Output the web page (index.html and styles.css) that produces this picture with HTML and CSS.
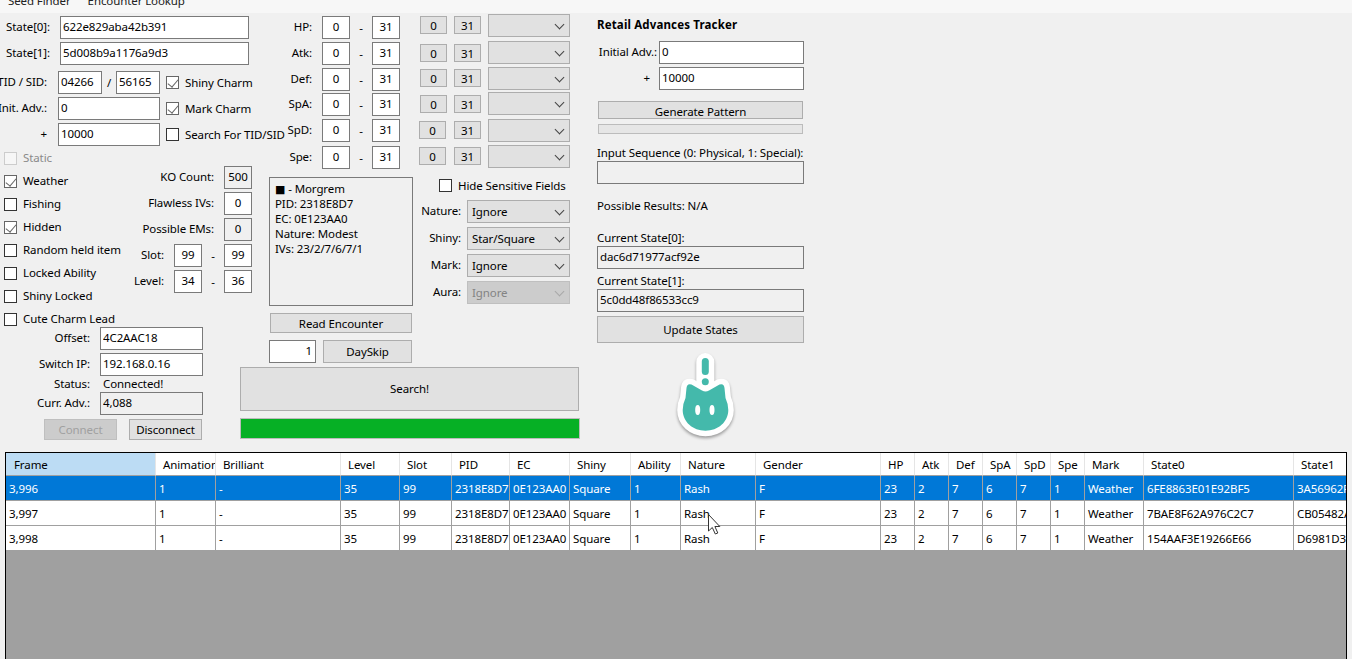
FILE: index.html
```html
<!DOCTYPE html>
<html lang="en">
<head>
<meta charset="utf-8">
<title>Raid Finder</title>
<link rel="stylesheet" href="styles.css">
</head>
<body>
<nav class="menu"><span class="menu-a">Seed Finder</span><span class="menu-b">Encounter Lookup</span></nav>
<main class="main">
  <section class="left">
    <div class="field"><span class="lbl w50">State[0]:</span><input class="tb w189 ml10" value="622e829aba42b391"></div>
    <div class="field"><span class="lbl w50">State[1]:</span><input class="tb w189 ml10" value="5d008b9a1176a9d3"></div>
    <div class="field mt6"><span class="lbl w47">TID / SID:</span><input class="tb w44 ml11" value="04266"><span class="slash">/</span><input class="tb w44" value="56165"><label class="chk ml6"><input type="checkbox" checked>Shiny Charm</label></div>
    <div class="field"><span class="lbl w47">Init. Adv.:</span><input class="tb w102 ml11" value="0"><label class="chk ml6"><input type="checkbox" checked>Mark Charm</label></div>
    <div class="field"><span class="lbl w47">+</span><input class="tb w102 ml11" value="10000"><label class="chk ml6"><input type="checkbox">Search For TID/SID</label></div>

    <div class="filters">
      <div class="checks">
        <label class="chk rowc off"><input type="checkbox" disabled>Static</label>
        <label class="chk rowc"><input type="checkbox" checked>Weather</label>
        <label class="chk rowc"><input type="checkbox">Fishing</label>
        <label class="chk rowc"><input type="checkbox" checked>Hidden</label>
        <label class="chk rowc"><input type="checkbox">Random held item</label>
        <label class="chk rowc"><input type="checkbox">Locked Ability</label>
        <label class="chk rowc"><input type="checkbox">Shiny Locked</label>
        <label class="chk rowc"><input type="checkbox">Cute Charm Lead</label>
      </div>
      <div class="counts">
        <div class="field end"><span class="lbl">KO Count:</span><input class="tb w28 ml10 ctr ro" value="500" readonly></div>
        <div class="field end"><span class="lbl">Flawless IVs:</span><input class="tb w28 ml10 ctr" value="0"></div>
        <div class="field end"><span class="lbl">Possible EMs:</span><input class="tb w28 ml10 ctr ro" value="0" readonly></div>
        <div class="field end"><span class="lbl">Slot:</span><input class="tb w28 ml10 ctr" value="99"><span class="dash">-</span><input class="tb w28 ctr" value="99"></div>
        <div class="field end"><span class="lbl">Level:</span><input class="tb w28 ml10 ctr" value="34"><span class="dash">-</span><input class="tb w28 ctr" value="36"></div>
      </div>
    </div>

    <div class="field m0"><span class="lbl w90">Offset:</span><input class="tb w103 ml10" value="4C2AAC18"></div>
    <div class="field"><span class="lbl w90">Switch IP:</span><input class="tb w103 ml10" value="192.168.0.16"></div>
    <div class="status"><span class="lbl w90">Status:</span><span class="ml13">Connected!</span></div>
    <div class="field m0"><span class="lbl w90">Curr. Adv.:</span><input class="tb w103 ml10 ro" value="4,088" readonly></div>
    <div class="conn"><button class="btn conn-btn" disabled>Connect</button><button class="btn conn-btn">Disconnect</button></div>
  </section>

  <section class="center">
    <div class="ivs">
      <div class="iv-inputs">
        <div class="field m0"><span class="lbl w52">HP:</span><input class="tb w28 ml10 ctr" value="0"><span class="dash">-</span><input class="tb w28 ctr" value="31"></div>
        <div class="field"><span class="lbl w52">Atk:</span><input class="tb w28 ml10 ctr" value="0"><span class="dash">-</span><input class="tb w28 ctr" value="31"></div>
        <div class="field"><span class="lbl w52">Def:</span><input class="tb w28 ml10 ctr" value="0"><span class="dash">-</span><input class="tb w28 ctr" value="31"></div>
        <div class="field mt2"><span class="lbl w52">SpA:</span><input class="tb w28 ml10 ctr" value="0"><span class="dash">-</span><input class="tb w28 ctr" value="31"></div>
        <div class="field"><span class="lbl w52">SpD:</span><input class="tb w28 ml10 ctr" value="0"><span class="dash">-</span><input class="tb w28 ctr" value="31"></div>
        <div class="field mt4"><span class="lbl w52">Spe:</span><input class="tb w28 ml10 ctr" value="0"><span class="dash">-</span><input class="tb w28 ctr" value="31"></div>
      </div>
      <div class="iv-btns">
        <div class="iv-pair"><button class="btn iv-btn">0</button><button class="btn iv-btn">31</button></div>
        <div class="iv-pair gap10"><button class="btn iv-btn">0</button><button class="btn iv-btn">31</button></div>
        <div class="iv-pair gap7"><button class="btn iv-btn">0</button><button class="btn iv-btn">31</button></div>
        <div class="iv-pair gap8"><button class="btn iv-btn">0</button><button class="btn iv-btn">31</button></div>
        <div class="iv-pair gap8"><button class="btn iv-btn nudge">0</button><button class="btn iv-btn">31</button></div>
        <div class="iv-pair gap8"><button class="btn iv-btn nudge">0</button><button class="btn iv-btn">31</button></div>
      </div>
      <div class="iv-sels">
        <div class="sel w82"></div>
        <div class="sel w82 gap4"></div>
        <div class="sel w82 gap3"></div>
        <div class="sel w82 gap2"></div>
        <div class="sel w82 gap4"></div>
        <div class="sel w82 gap3"></div>
      </div>
    </div>

    <div class="lower">
      <div class="enc">
        <div class="enc-box"><span class="sq">■</span> - Morgrem<br>PID: 2318E8D7<br>EC: 0E123AA0<br>Nature: Modest<br>IVs: 23/2/7/6/7/1</div>
        <button class="btn read">Read Encounter</button>
        <div class="skip"><input class="tb w47 rt" value="1"><button class="btn dayskip">DaySkip</button></div>
      </div>
      <div class="opts">
        <label class="chk hide"><input type="checkbox">Hide Sensitive Fields</label>
        <div class="opt first"><span class="lbl w48">Nature:</span><div class="sel w103">Ignore</div></div>
        <div class="opt"><span class="lbl w48">Shiny:</span><div class="sel w103">Star/Square</div></div>
        <div class="opt"><span class="lbl w48">Mark:</span><div class="sel w103">Ignore</div></div>
        <div class="opt"><span class="lbl w48">Aura:</span><div class="sel w103 dis">Ignore</div></div>
      </div>
    </div>
    <button class="btn search">Search!</button>
    <div class="progress"></div>
  </section>

  <section class="tracker">
    <h2 class="title">Retail Advances Tracker</h2>
    <div class="field mt8"><span class="lbl w60">Initial Adv.:</span><input class="tb w145 ml2" value="0"></div>
    <div class="field"><span class="lbl w53">+</span><input class="tb w145 ml9" value="10000"></div>
    <button class="btn gen">Generate Pattern</button>
    <div class="track-bar"></div>
    <div class="cap cap-seq">Input Sequence (0: Physical, 1: Special):</div>
    <input class="tb w207 ro" readonly>
    <div class="cap cap-res">Possible Results: N/A</div>
    <div class="cap cap-s0">Current State[0]:</div>
    <input class="tb w207 ro" value="dac6d71977acf92e" readonly>
    <div class="cap cap-s1">Current State[1]:</div>
    <input class="tb w207 ro" value="5c0dd48f86533cc9" readonly>
    <button class="btn update">Update States</button>
    <svg class="mascot" width="60" height="86" viewBox="0 0 60 86">
      <g fill="#fff" stroke="#fff" stroke-linejoin="round" stroke-linecap="round">
        <path stroke-width="18" d="M29.300 9V28"/>
        <path stroke-width="11" d="M10.500 35Q11 30 15.500 31.500L26 37.500Q29.500 39.500 33 37.500L43.500 31.500Q48 30 48.500 35L49.500 45Q52.300 51 52.300 57C52.300 69 42 77.700 29.500 77.700C17 77.700 6.700 69 6.700 57Q6.700 51 9.500 45Z"/>
      </g>
      <rect x="25.800" y="5" width="7" height="17" rx="3.500" fill="#44b9ab"/>
      <circle cx="29.300" cy="28.700" r="3.500" fill="#44b9ab"/>
      <path fill="#44b9ab" d="M10.500 35Q11 30 15.500 31.500L26 37.500Q29.500 39.500 33 37.500L43.500 31.500Q48 30 48.500 35L49.500 45Q52.300 51 52.300 57C52.300 69 42 77.700 29.500 77.700C17 77.700 6.700 69 6.700 57Q6.700 51 9.500 45Z"/>
      <ellipse cx="21.700" cy="57" rx="2.500" ry="5" fill="#fff"/>
      <ellipse cx="36" cy="57" rx="2.500" ry="5" fill="#fff"/>
    </svg>
  </section>
</main>

<section class="results">
  <table class="grid">
    <colgroup>
      <col class="c150"><col class="c60"><col class="c125"><col class="c59"><col class="c52"><col class="c58"><col class="c60"><col class="c61"><col class="c50"><col class="c75"><col class="c125"><col class="c34"><col class="c34"><col class="c34"><col class="c34"><col class="c34"><col class="c34"><col class="c59"><col class="c150"><col class="c150">
    </colgroup>
    <thead>
      <tr><th class="sorted">Frame</th><th>Animation</th><th>Brilliant</th><th>Level</th><th>Slot</th><th>PID</th><th>EC</th><th>Shiny</th><th>Ability</th><th>Nature</th><th>Gender</th><th>HP</th><th>Atk</th><th>Def</th><th>SpA</th><th>SpD</th><th>Spe</th><th>Mark</th><th>State0</th><th>State1</th></tr>
    </thead>
    <tbody>
      <tr class="picked"><td>3,996</td><td>1</td><td>-</td><td>35</td><td>99</td><td>2318E8D7</td><td>0E123AA0</td><td>Square</td><td>1</td><td>Rash</td><td>F</td><td>23</td><td>2</td><td>7</td><td>6</td><td>7</td><td>1</td><td>Weather</td><td>6FE8863E01E92BF5</td><td>3A56962F7D01C4E8</td></tr>
      <tr><td>3,997</td><td>1</td><td>-</td><td>35</td><td>99</td><td>2318E8D7</td><td>0E123AA0</td><td>Square</td><td>1</td><td>Rash</td><td>F</td><td>23</td><td>2</td><td>7</td><td>6</td><td>7</td><td>1</td><td>Weather</td><td>7BAE8F62A976C2C7</td><td>CB05482A19E7D360</td></tr>
      <tr><td>3,998</td><td>1</td><td>-</td><td>35</td><td>99</td><td>2318E8D7</td><td>0E123AA0</td><td>Square</td><td>1</td><td>Rash</td><td>F</td><td>23</td><td>2</td><td>7</td><td>6</td><td>7</td><td>1</td><td>Weather</td><td>154AAF3E19266E66</td><td>D6981D36A04B7F12</td></tr>
    </tbody>
  </table>
  <svg class="cursor" width="14" height="23" viewBox="0 0 14 23"><path d="M1.500 1.500V18L5.300 14.500L8.300 21L10.800 20L7.900 13.500H12.800Z" fill="#fff" stroke="#333" stroke-width="1"/></svg>
</section>
</body>
</html>
```
FILE: styles.css
```css
* { box-sizing: border-box; }
html, body { margin: 0; padding: 0; }
body {
  width: 1352px;
  height: 659px;
  overflow: hidden;
  background: #f0f0f0;
  color: #000;
  font: 11.5px/16px "Noto Sans", "Open Sans", sans-serif;
  letter-spacing: -.1px;
}
input, button { font: inherit; color: inherit; margin: 0; letter-spacing: inherit; }

.menu { height: 13px; overflow: hidden; background: #f7f7f7; display: flex; line-height: 16px; }
.menu span { margin-top: -7px; height: 16px; white-space: nowrap; color: #222; }
.menu-a { margin-left: 8px; }
.menu-b { margin-left: 17px; }

.main { display: flex; height: 439px; }
.left { width: 260px; flex: none; }
.center { width: 330px; flex: none; }
.tracker { width: 207px; flex: none; margin-left: 7px; }

.field { display: flex; align-items: center; height: 23px; margin-top: 3px; white-space: nowrap; }
.field.m0 { margin-top: 0; }
.field.end { justify-content: flex-end; }
.field.mt2 { margin-top: 2px; }
.field.mt4 { margin-top: 4px; }
.field.mt6 { margin-top: 6px; }
.field.mt8 { margin-top: 8px; }
.ml2 { margin-left: 2px; }
.ml6 { margin-left: 6px; }
.ml9 { margin-left: 9px; }
.ml10 { margin-left: 10px; }
.ml11 { margin-left: 11px; }
.ml13 { margin-left: 13px; }

.lbl { display: flex; justify-content: flex-end; flex: none; white-space: nowrap; }
.field .lbl { padding-bottom: 2px; }
.w47 { width: 47px; }
.w48 { width: 48px; }
.w50 { width: 50px; }
.w52 { width: 52px; }
.w53 { width: 53px; }
.w60 { width: 60px; }
.w90 { width: 90px; }

.tb {
  display: block;
  flex: none;
  height: 23px;
  padding: 0 2px 2px;
  background: #fff;
  border: 1px solid #7a7a7a;
  border-radius: 0;
  outline: none;
}
.tb.w28 { width: 28px; }
.tb.w44 { width: 44px; }
.tb.w47 { width: 47px; }
.tb.w102 { width: 102px; }
.tb.w103 { width: 103px; }
.tb.w145 { width: 145px; }
.tb.w189 { width: 189px; }
.tb.w207 { width: 207px; }
.ctr { text-align: center; }
.rt { text-align: right; padding-right: 3px; }
.ro { background: #f0f0f0; }

.slash { width: 14px; text-align: center; flex: none; }
.dash { width: 22px; text-align: center; flex: none; }

.chk { display: flex; align-items: center; white-space: nowrap; }
.chk input {
  appearance: none;
  position: relative;
  flex: none;
  width: 13px;
  height: 13px;
  margin: 0 6px 0 0;
  background: #fff;
  border: 1px solid #333;
}
.chk input:checked { border-color: #666; }
.chk input:checked::after {
  content: "";
  position: absolute;
  left: 3px;
  top: 0;
  width: 5px;
  height: 9px;
  border: solid #666;
  border-width: 0 1.5px 1.5px 0;
  transform: rotate(40deg);
}
.chk.off { color: #8a8a8a; }
.chk.off input { border-color: #ccc; background: #f6f6f6; }

.filters { display: flex; height: 180px; margin-top: 1px; justify-content: space-between; width: 252px; }
.checks { padding-left: 4px; }
.rowc { height: 23px; padding-bottom: 2px; }
.chk.rowc input { margin-top: 2px; }
.counts { padding-top: 16px; }

.status { display: flex; height: 16px; align-items: center; white-space: nowrap; }

.btn {
  display: block;
  flex: none;
  padding: 0;
  background: #e1e1e1;
  border: 1px solid #adadad;
  border-radius: 0;
  text-align: center;
  white-space: nowrap;
}
.btn:disabled { background: #ccc; border-color: #bfbfbf; color: #a0a0a0; }
.conn { display: flex; gap: 12px; margin: 4px 0 0 44px; }
.conn-btn { width: 73px; height: 21px; }

.ivs { display: flex; height: 164px; }
.iv-inputs { width: 140px; flex: none; padding-top: 3px; }
.iv-btns { margin-left: 20px; width: 61px; flex: none; padding-top: 3px; }
.iv-pair { display: flex; justify-content: flex-end; gap: 7px; width: 61px; }
.iv-btn { width: 27px; height: 18px; padding-top: 2px; line-height: 14px; }
.iv-btn.nudge { margin-right: 1px; }
.iv-sels { margin-left: 7px; padding-top: 1px; }
.gap2 { margin-top: 2px; }
.gap3 { margin-top: 3px; }
.gap4 { margin-top: 4px; }
.gap7 { margin-top: 7px; }
.gap8 { margin-top: 8px; }
.gap10 { margin-top: 10px; }

.sel {
  position: relative;
  height: 23px;
  flex: none;
  padding-left: 4px;
  line-height: 22px;
  background: #e1e1e1;
  border: 1px solid #adadad;
}
.sel::after {
  content: "";
  position: absolute;
  right: 6px;
  top: 6px;
  width: 6px;
  height: 6px;
  border: solid #444;
  border-width: 0 1px 1px 0;
  transform: rotate(45deg);
}
.sel.w82 { width: 82px; }
.sel.w103 { width: 103px; }
.sel.dis { background: #ccc; border-color: #bfbfbf; color: #838383; }
.sel.dis::after { border-color: #a8a8a8; }

.lower { display: flex; margin-left: 9px; }
.enc { width: 144px; flex: none; }
.enc-box {
  height: 129px;
  padding: 3px 5px;
  line-height: 15px;
  background: #f0f0f0;
  border: 1px solid #7a7a7a;
  white-space: nowrap;
}
.sq { font-family: "DejaVu Sans", sans-serif; font-size: 11px; line-height: 0; }
.read { width: 142px; height: 20px; margin: 7px 0 0 1px; padding-top: 1px; line-height: 16px; }
.skip { display: flex; gap: 7px; margin-top: 7px; }
.dayskip { width: 89px; height: 23px; }

.opts { margin-left: 0; }
.hide { margin: 2px 0 0 26px; height: 13px; }
.opt { display: flex; align-items: center; margin-top: 4px; white-space: nowrap; }
.opt.first { margin-top: 8px; }
.opt .lbl { padding-bottom: 2px; }
.opt .sel { margin-left: 6px; }

.search { width: 339px; height: 44px; margin: 4px 0 0 -20px; }
.progress { width: 340px; height: 21px; margin: 7px 0 0 -20px; background: #06b025; border: 1px solid #bcbcbc; }

.title { margin: 4px 0 0; height: 16px; font-size: 11.500px; line-height: 16px; font-weight: 700; letter-spacing: .15px; white-space: nowrap; }
.gen { width: 205px; height: 18px; margin: 11px 0 0 1px; padding-top: 3px; line-height: 14px; }
.track-bar { width: 205px; height: 10px; margin: 5px 0 0 1px; background: #e6e6e6; border: 1px solid #bcbcbc; }
.cap { height: 16px; white-space: nowrap; }
.cap-seq { margin-top: 11px; }
.cap-res { margin-top: 14px; }
.cap-s0 { margin-top: 16px; }
.cap-s1 { margin-top: 4px; }
.update { width: 207px; height: 27px; margin-top: 4px; }
.mascot { display: block; margin: 10px 0 0 79px; overflow: visible; filter: drop-shadow(0 2px 1.5px rgba(0, 0, 0, .35)); }

.results {
  position: relative;
  width: 1342px;
  height: 207px;
  margin-left: 5px;
  overflow: hidden;
  background: #a0a0a0;
  border: solid #000;
  border-width: 1px 1px 0;
}
.grid { table-layout: fixed; width: 1438px; border-collapse: separate; border-spacing: 0; }
.c34 { width: 34px; }
.c50 { width: 50px; }
.c52 { width: 52px; }
.c58 { width: 58px; }
.c59 { width: 59px; }
.c60 { width: 60px; }
.c61 { width: 61px; }
.c75 { width: 75px; }
.c125 { width: 125px; }
.c150 { width: 150px; }
.grid th {
  height: 23px;
  padding: 2px 0 0 7px;
  overflow: hidden;
  background: #fff;
  border-right: 1px solid #e5e5e5;
  border-bottom: 1px solid #a0a0a0;
  font-weight: 400;
  text-align: left;
  white-space: nowrap;
}
.grid th.sorted { padding-left: 8px; background: #bcdcf4; }
.grid td {
  height: 25px;
  padding: 2px 0 0 3px;
  overflow: hidden;
  background: #fff;
  border-right: 1px solid #a0a0a0;
  border-bottom: 1px solid #a0a0a0;
  white-space: nowrap;
}
.picked td { background: #0078d7; color: #fff; }
.cursor { position: absolute; left: 701px; top: 60px; }
```
